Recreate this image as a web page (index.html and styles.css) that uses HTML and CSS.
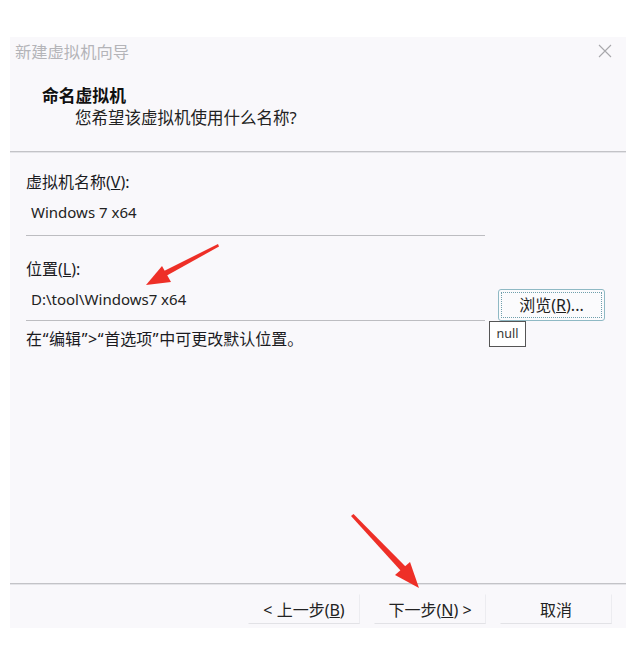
FILE: index.html
```html
<!DOCTYPE html>
<html lang="zh">
<head>
<meta charset="utf-8">
<title>新建虚拟机向导</title>
<link rel="stylesheet" href="styles.css">
</head>
<body>
<div class="dialog">
  <div class="titlebar">
    <span class="title">新建虚拟机向导</span>
    <svg class="close" width="14" height="14" viewBox="0 0 14 14"><path d="M1 1 L13 13 M13 1 L1 13" stroke="#a8a8ac" stroke-width="1.1" fill="none"/></svg>
  </div>
  <div class="header">
    <div class="h1">命名虚拟机</div>
    <div class="h2">您希望该虚拟机使用什么名称?</div>
  </div>
  <div class="sep"></div>
  <div class="body">
    <div class="label label-first">虚拟机名称(<u>V</u>):</div>
    <div class="field field-first">Windows 7 x64</div>
    <div class="label label-second">位置(<u>L</u>):</div>
    <div class="row">
      <div class="field field-second">D:\tool\Windows7 x64</div>
      <button class="browse"><span class="focus">浏览(<u>R</u>)...</span><span class="tip">null</span></button>
    </div>
    <div class="note">在<span class="q">“</span>编辑<span class="q">”</span>&gt;<span class="q">“</span>首选项<span class="q">”</span>中可更改默认位置。</div>
  </div>
  <div class="sep"></div>
  <div class="footer">
    <button class="btn">&lt; 上一步(<u>B</u>)</button>
    <button class="btn">下一步(<u>N</u>) &gt;</button>
    <button class="btn">取消</button>
  </div>
</div>
<svg class="arrows" width="637" height="666" viewBox="0 0 637 666">
  <polygon points="218,244 219,246.5 166,276 164,271" fill="#ee2f27"/>
  <polygon points="146,285 162,266 171,282" fill="#ee2f27"/>
  <polygon points="351,516 353.5,514 406,567 401,571" fill="#ee2f27"/>
  <polygon points="419,588 395,575 410,562" fill="#ee2f27"/>
</svg>
</body>
</html>
```

FILE: styles.css
```css
html, body {
  margin: 0;
  padding: 0;
  background: #ffffff;
}
body {
  position: relative;
  width: 637px;
  height: 666px;
  font-family: "Noto Sans", "Noto Sans CJK SC", sans-serif;
  color: #1b1b1f;
}
.dialog {
  margin: 37px 0 0 10px;
  width: 616px;
  height: 591px;
  background: #f9f8fb;
  display: flex;
  flex-direction: column;
}
.titlebar {
  height: 28px;
  display: flex;
  align-items: center;
  justify-content: space-between;
  padding: 0 14px 0 5px;
}
.title {
  font-size: 16.3px;
  line-height: 28px;
  color: #b4b4b8;
  font-family: "Noto Sans CJK SC", sans-serif;
}
.header {
  padding: 19px 0 22px 32px;
}
.h1 {
  font-family: "Noto Sans CJK SC", sans-serif;
  font-weight: 700;
  font-size: 16.8px;
  line-height: 22px;
  color: #111;
}
.h2 {
  font-family: "Noto Sans", "Noto Sans CJK SC", sans-serif;
  font-size: 16.5px;
  line-height: 22px;
  padding-left: 33px;
  margin-top: 1px;
  color: #222;
}
.sep {
  height: 1px;
  border-top: 1px solid #c3c3c7;
  background: #e4e4e8;
}
.body {
  flex: 1;
  padding: 0 0 0 16px;
  font-size: 16px;
}
.label {
  line-height: 20px;
  font-size: 16px;
}
.label-first {
  margin-top: 19px;
}
.label-second {
  margin-top: 23px;
}
.field {
  width: 454px;
  padding: 10px 0 10px 5px;
  line-height: 20px;
  border-bottom: 1px solid #bdbdc1;
  font-size: 15px;
  color: #222;
}
.field-first {
  padding-bottom: 13px;
}
.field-second {
  padding-bottom: 11px;
}
.row {
  display: flex;
  align-items: flex-end;
  gap: 13px;
}
.browse {
  position: relative;
  width: 107px;
  height: 32px;
  padding: 2px;
  border: 1px solid #8fb9c4;
  border-radius: 3px;
  background: #fbfbfd;
  font-family: "Noto Sans", "Noto Sans CJK SC", sans-serif;
  font-size: 16px;
  color: #1e1e1e;
  display: flex;
}
.focus {
  flex: 1;
  display: flex;
  align-items: center;
  justify-content: center;
  border: 1px dotted #6f9fac;
  line-height: 20px;
}
.tip {
  position: absolute;
  left: -10px;
  top: 31px;
  width: 35px;
  height: 24px;
  border: 1px solid #555;
  background: #ffffff;
  font-size: 12.5px;
  line-height: 23px;
  text-align: center;
  color: #333;
}
.note {
  margin-top: 8px;
  line-height: 20px;
  font-size: 16px;
}
.q {
  display: inline-block;
  width: 7px;
  text-align: center;
}
.footer {
  height: 43px;
  display: flex;
  justify-content: flex-end;
  align-items: flex-start;
  gap: 14px;
  padding: 9px 14px 0 0;
  box-sizing: border-box;
}
.btn {
  width: 112px;
  height: 30px;
  border: 1px solid transparent;
  border-right-color: #ececf0;
  border-bottom: 1px solid #e2e2e6;
  background: transparent;
  font-family: "Noto Sans", "Noto Sans CJK SC", sans-serif;
  font-size: 16px;
  color: #222;
  padding: 0;
}
.arrows {
  position: absolute;
  left: 0;
  top: 0;
  pointer-events: none;
}
```
